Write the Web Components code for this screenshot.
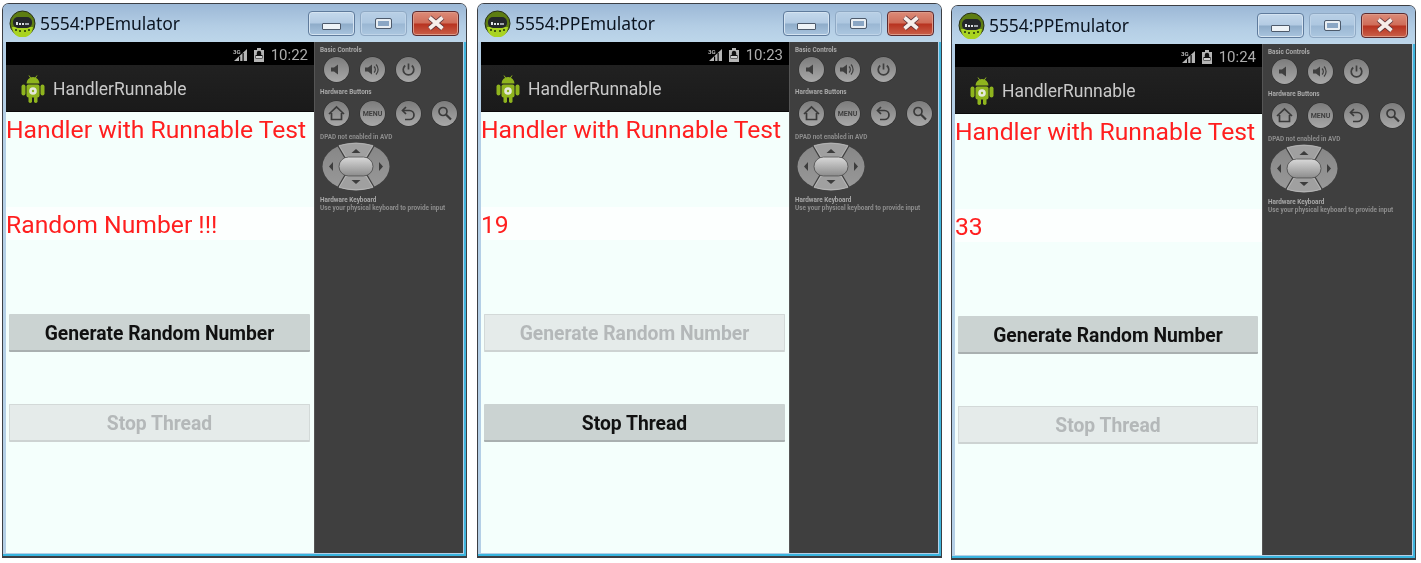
<!DOCTYPE html>
<html>
<head>
<meta charset="utf-8">
<title>Handler with Runnable</title>
<style>
  html, body { margin: 0; background: #fff; }
  body { width: 1421px; height: 563px; overflow: hidden; }
  .windows { display: flex; gap: 10px; padding: 3px 0 0 2px; align-items: flex-start; }
  .windows emu-window:nth-child(3) { margin: 2px 0 0 -1px; --screen-width: 307px; }
</style>
</head>
<body>
<div class="windows">
  <emu-window time="10:22" stop-disabled>Random Number !!!</emu-window>
  <emu-window time="10:23" gen-disabled>19</emu-window>
  <emu-window time="10:24" stop-disabled>33</emu-window>
</div>

<template id="emu-window-tpl">
  <style>
    :host { display: block; width: 465px; height: 555px; font-family: Roboto, "Liberation Sans", sans-serif; }
    .frame { box-sizing: border-box; height: 100%; display: flex; flex-direction: column;
      border: 1.5px solid #3c3f44; border-bottom-width: 2px; border-radius: 7px 7px 0 0; background: #b4cfe6;
      box-shadow: inset -2px 0 0 #3fb4dc, inset 0 -2px 0 #39b5df; filter: blur(.45px); }
    .title { height: 38px; flex: none; display: flex; align-items: center; padding: 0 7px 0 6px;
      background: linear-gradient(#9cb8d6, #b4cee5 60%, #bdd6ea); border-radius: 5px 5px 0 0; }
    .name { margin-left: 4px; font: 17.5px "Noto Sans", sans-serif; color: #0b1420; letter-spacing: -.1px; flex: 1; }
    .body { flex: 1; min-height: 0; display: flex; margin: 0 3.5px 3px 3px; }
  </style>
  <div class="frame">
    <div class="title">
      <svg width="27" height="27" viewBox="0 0 27 27">
        <circle cx="13.5" cy="13.5" r="12.5" fill="#5d7d12"/>
        <circle cx="13.5" cy="13.5" r="12.5" fill="none" stroke="#262e18" stroke-width="1"/>
        <path d="M3 17a10.5 10.5 0 0 0 21 0z" fill="#a9d321"/>
        <rect x="4" y="7" width="19" height="11" rx="5" fill="#24272a"/>
        <rect x="7" y="12" width="2" height="3" fill="#dfe3e6"/><rect x="10" y="13" width="2" height="2" fill="#dfe3e6"/>
        <rect x="13" y="13" width="2" height="2" fill="#dfe3e6"/><rect x="16" y="13" width="4" height="2" fill="#9fa5aa"/>
        <g fill="#20300a"><circle cx="7" cy="20" r="1"/><circle cx="11" cy="21" r="1"/><circle cx="16" cy="21" r="1"/><circle cx="20" cy="20" r="1"/></g>
      </svg>
      <span class="name">5554:PPEmulator</span>
      <window-buttons></window-buttons>
    </div>
    <div class="body">
      <android-screen id="screen"><slot></slot></android-screen>
      <control-panel></control-panel>
    </div>
  </div>
</template>

<template id="window-buttons-tpl">
  <style>
    :host { display: flex; gap: 5px; }
    .b { width: 47px; height: 25px; box-sizing: border-box; border-radius: 4px; display: flex; align-items: center; justify-content: center;
      border: 1px solid #5f7b9c; box-shadow: inset 0 0 0 1px #d5e4f1;
      background: linear-gradient(#c5d9ec, #b3cbe3 48%, #8eacc9 52%, #a9c4de); }
    .max { border-color: #8fa9c4; box-shadow: inset 0 0 0 1px #bfd4e8; background: linear-gradient(#b9d0e6, #adc7e0 48%, #9ab7d3 52%, #acc7e0); }
    .close { border-color: #5c2b2f; box-shadow: inset 0 0 0 1px #dd9a88; background: linear-gradient(#dc8b78, #cf6d59 48%, #b8321f 52%, #c9604a); }
    .min i { display: block; width: 17px; height: 5px; margin-top: 7px; background: #eef3f7; border: 1px solid #4d5a6b; border-radius: 1px; }
    .max i { display: block; width: 11px; height: 5px; background: #8aa6c4; border: 2px solid #e8eef3; outline: 1.5px solid #4d5a6b; border-radius: 1px; }
  </style>
  <div class="b min"><i></i></div>
  <div class="b max"><i></i></div>
  <div class="b close">
    <svg width="22" height="16" viewBox="0 0 22 16"><path d="M4.5 2.5L17.5 13.5M17.5 2.5L4.5 13.5" fill="none" stroke="#5a3036" stroke-width="5.5"/><path d="M4.5 2.5L17.5 13.5M17.5 2.5L4.5 13.5" fill="none" stroke="#f6eeea" stroke-width="3.8"/></svg>
  </div>
</template>

<template id="android-screen-tpl">
  <style>
    :host { display: flex; flex-direction: column; width: var(--screen-width, 308px); flex: none; background: #f4fffc; }
    .status { height: 23px; flex: none; background: #000; display: flex; align-items: center; justify-content: flex-end; gap: 5px; padding: 2px 6px 0 0; box-sizing: border-box; color: #adadad; font-size: 15px; }
    .bar { height: 47px; flex: none; background: linear-gradient(#212121, #1a1a1a); border-bottom: 1px solid #0a0a0a; display: flex; align-items: center; padding: 2px 0 0 15px; color: #c9c9c9; font-size: 17.5px; gap: 8px; box-sizing: border-box; }
    .heading { color: #ff1f1f; font-size: 24.7px; line-height: 36px; white-space: nowrap; }
    .result { margin-top: 59px; height: 33px; background: #fcfffe; color: #ff1f1f; font-size: 24.7px; line-height: 36px; white-space: nowrap; }
    .buttons { display: flex; flex-direction: column; gap: 52px; margin: 74px 4px 0 3px; }
    .btn { height: 38px; box-sizing: border-box; padding-top: 2px; display: flex; align-items: center; justify-content: center; font-size: 19.3px; font-weight: 700; border-radius: 1px; background: #cbd3d2; color: #111; border-bottom: 2px solid #a9b0b0; }
    .btn.off { background: #e5ebea; color: #b4b8b9; border: 1px solid #d3d9d8; border-bottom: 2px solid #cdd3d2; }
  </style>
  <div class="status">
    <svg width="15" height="14" viewBox="0 0 15 14"><path d="M1 13L14 1v12z" fill="#b5b5b5"/><path d="M9.5 5h1.2v8H9.5zM6 8.5h1.2V13H6z" fill="#000"/><path d="M0 0h8v6H0z" fill="#000"/><text x="0" y="5.5" font-size="6" font-weight="700" fill="#b5b5b5" font-family="Roboto">3G</text></svg>
    <svg width="12" height="14" viewBox="0 0 12 14" style="margin-right:1px"><path d="M4 0h4v2h3v12H1V2h3z" fill="#b5b5b5"/><path d="M3.8 7V5a2.2 2.2 0 0 1 4.4 0v2H9.5v3.5h-7V7z" fill="#111"/><path d="M3 8h6v2H3z" fill="#d0d0d0"/></svg>
    <span id="time"></span>
  </div>
  <div class="bar">
    <svg width="24" height="28" viewBox="0 0 24 28">
      <g fill="#8fb41e">
        <path d="M5.5 8.5a6.5 6.5 0 0 1 13 0z"/><rect x="5.5" y="9.5" width="13" height="13" rx="2"/>
        <rect x="0.5" y="9.5" width="4" height="11" rx="2"/><rect x="19.5" y="9.5" width="4" height="11" rx="2"/>
        <rect x="7.5" y="21" width="3.5" height="7" rx="1.7"/><rect x="13" y="21" width="3.5" height="7" rx="1.7"/>
      </g>
      <circle cx="12" cy="16" r="3.8" fill="#e4e8da"/><circle cx="12" cy="16" r="1.2" fill="#8fb41e"/>
      <path d="M8 0.5l2 3M16 0.5l-2 3" stroke="#8fb41e" stroke-width="1"/>
    </svg>
    <span>HandlerRunnable</span>
  </div>
  <div class="heading">Handler with Runnable Test</div>
  <div class="result"><slot></slot></div>
  <div class="buttons">
    <div class="btn" id="gen">Generate Random Number</div>
    <div class="btn" id="stop">Stop Thread</div>
  </div>
</template>

<template id="control-panel-tpl">
  <style>
    :host { flex: 1; display: block; background: #3f3f3f; color: #a9a9a9; padding: 5px 0 0 5px; font: 700 6.4px/6px Roboto, sans-serif; border-left: 1px solid #555; box-sizing: border-box; }
    .row { display: flex; gap: 11px; margin: 4px 0 0 4px; }
    .dpad { display: block; margin: 2px 0 6px 2px; }
    p { margin: 0; white-space: nowrap; }
    .dim { color: #8d8d8d; }
  </style>
  <div class="label">Basic Controls</div>
  <div class="row">
    <round-key><svg viewBox="0 0 25 25"><path d="M7 10.5h3l4-3v10l-4-3H7z" fill="#3f3f3f"/></svg></round-key>
    <round-key><svg viewBox="0 0 25 25"><path d="M5 10.5h3l4-3v10l-4-3H5z" fill="#3f3f3f"/><path d="M14 9.5a4 4 0 0 1 0 6M16 7.5a7 7 0 0 1 0 10" fill="none" stroke="#3f3f3f" stroke-width="1.2"/></svg></round-key>
    <round-key><svg viewBox="0 0 25 25"><path d="M9.2 8.5a5.3 5.3 0 1 0 6.6 0" fill="none" stroke="#3f3f3f" stroke-width="1.7"/><path d="M12.5 6.5v6" stroke="#3f3f3f" stroke-width="1.7"/></svg></round-key>
  </div>
  <div class="label" style="margin-top:7px">Hardware Buttons</div>
  <div class="row" style="margin-top:6px">
    <round-key><svg viewBox="0 0 25 25"><path d="M5 13l7.5-7 7.5 7M7.5 12v6.5h10V12" fill="none" stroke="#3a3a3a" stroke-width="1.7"/></svg></round-key>
    <round-key><svg viewBox="0 0 25 25"><text x="12.5" y="14.5" font-size="7" font-weight="700" text-anchor="middle" fill="#3f3f3f" font-family="Roboto">MENU</text></svg></round-key>
    <round-key><svg viewBox="0 0 25 25"><path d="M10 6L6.5 9.5 10 13" fill="none" stroke="#3a3a3a" stroke-width="1.7"/><path d="M7 9.5h6.5a4.5 4.5 0 0 1 0 9H9" fill="none" stroke="#3a3a3a" stroke-width="1.7"/></svg></round-key>
    <round-key><svg viewBox="0 0 25 25"><circle cx="11" cy="10.5" r="4" fill="none" stroke="#3a3a3a" stroke-width="1.7"/><path d="M14 13.5l5 5" stroke="#3a3a3a" stroke-width="2.2"/></svg></round-key>
  </div>
  <div class="label dim" style="margin-top:8px">DPAD not enabled in AVD</div>
  <svg class="dpad" width="68" height="49" viewBox="0 0 68 49">
    <defs>
      <linearGradient id="rim" x1="0" y1="0" x2="0" y2="1"><stop offset="0" stop-color="#858585"/><stop offset="1" stop-color="#9a9a9a"/></linearGradient>
      <linearGradient id="pill" x1="0" y1="0" x2="0" y2="1"><stop offset="0" stop-color="#d9d9d9"/><stop offset="1" stop-color="#8c8c8c"/></linearGradient>
    </defs>
    <ellipse cx="34" cy="24.5" rx="33.5" ry="24" fill="url(#rim)"/>
    <path d="M16 4l7 12M52 4l-7 12M16 45l7-12M52 45l-7-12" stroke="#3f3f3f" stroke-width="1.2"/>
    <path d="M17 3.5Q34-1 51 3.5L44 15H24zM17 45.5Q34 50 51 45.5L44 34H24z" fill="#a0a0a0"/>
    <path d="M17 3.5Q34-1 51 3.5L44 15H24zM17 45.5Q34 50 51 45.5L44 34H24z" fill="none" stroke="#d0d0d0" stroke-width=".5"/>
    <rect x="17" y="15" width="34" height="19" rx="9.5" fill="url(#pill)" stroke="#4a4a4a" stroke-width=".8"/>
    <path d="M34 7l4.5 4h-9zM34 42l4.5-4h-9zM7 24.5l4-4.5v9zM61 24.5l-4-4.5v9z" fill="#3d3d3d"/>
  </svg>
  <p>Hardware Keyboard</p>
  <p class="dim" style="margin-top:2px">Use your physical keyboard to provide input</p>
</template>

<template id="round-key-tpl">
  <style>
    :host { display: block; width: 25px; height: 25px; border-radius: 50%;
      background: linear-gradient(#7c7c7c, #a8a8a8); box-shadow: 0 0 0 .5px #2f2f2f; }
    ::slotted(svg) { display: block; width: 25px; height: 25px; }
  </style>
  <slot></slot>
</template>

<script>
function fromTemplate(host, id) {
  host.attachShadow({ mode: "open" });
  host.shadowRoot.appendChild(document.getElementById(id).content.cloneNode(true));
}

class WindowButtons extends HTMLElement {
  constructor() { super(); fromTemplate(this, "window-buttons-tpl"); }
}
class RoundKey extends HTMLElement {
  constructor() { super(); fromTemplate(this, "round-key-tpl"); }
}
class ControlPanel extends HTMLElement {
  constructor() { super(); fromTemplate(this, "control-panel-tpl"); }
}
class AndroidScreen extends HTMLElement {
  constructor() { super(); fromTemplate(this, "android-screen-tpl"); }
  configure(time, genOff, stopOff) {
    const root = this.shadowRoot;
    root.getElementById("time").textContent = time;
    root.getElementById("gen").classList.toggle("off", genOff);
    root.getElementById("stop").classList.toggle("off", stopOff);
  }
}
class EmuWindow extends HTMLElement {
  constructor() { super(); fromTemplate(this, "emu-window-tpl"); }
  connectedCallback() {
    this.shadowRoot.getElementById("screen").configure(
      this.getAttribute("time"),
      this.hasAttribute("gen-disabled"),
      this.hasAttribute("stop-disabled"),
    );
  }
}

customElements.define("window-buttons", WindowButtons);
customElements.define("round-key", RoundKey);
customElements.define("control-panel", ControlPanel);
customElements.define("android-screen", AndroidScreen);
customElements.define("emu-window", EmuWindow);
</script>
</body>
</html>
